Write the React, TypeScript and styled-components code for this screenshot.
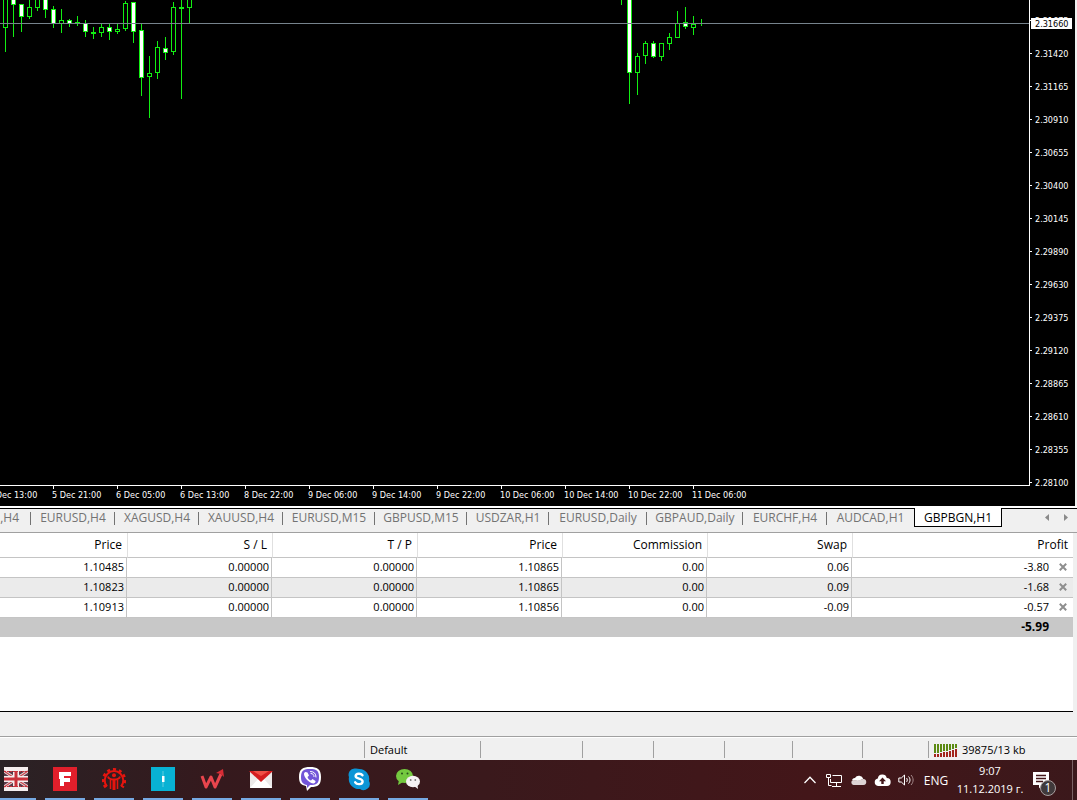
import React from 'react';
import styled, { createGlobalStyle } from 'styled-components';

const GlobalStyle = createGlobalStyle`
  * { box-sizing: border-box; }
  body { margin: 0; background: #f0f0f0; }
  button { font: inherit; color: inherit; border: 0; padding: 0; margin: 0; background: none; }
  ul, ol { list-style: none; margin: 0; padding: 0; }
`;

const Page = styled.div`
  display: flex;
  flex-direction: column;
  height: 100vh;
  overflow: hidden;
  background: #f0f0f0;
  color: #000;
  font-family: 'Open Sans', 'Noto Sans', sans-serif;
  font-size: 12px;
`;

/* ---------- Chart ---------- */

const Chart = styled.section`
  flex: 1 1 0;
  min-height: 0;
  display: grid;
  grid-template-columns: 1fr 45px;
  margin-right: 2px;
  background: #000;
  color: #fff;
  font-family: 'DejaVu Sans Condensed', 'Open Sans', sans-serif;
  font-size: 9px;
  overflow: hidden;
`;

const ChartMain = styled.div`
  display: flex;
  flex-direction: column;
  min-width: 0;
  min-height: 0;
`;

const Plot = styled.div`
  flex: 1;
  min-height: 0;
  overflow: hidden;
  border-right: 1px solid #fff;
  border-bottom: 1px solid #fff;
`;

const PlotSvg = styled.svg`
  display: block;
  width: 100%;
  height: 100%;
`;

const TimeAxis = styled.ol`
  display: flex;
  height: 20px;
  margin-left: -12px;
  overflow: hidden;
`;

const TimeLabel = styled.li`
  flex: 0 0 64px;
  line-height: 12px;
  white-space: nowrap;
  &::before {
    content: '';
    display: block;
    width: 1px;
    height: 3px;
    margin-left: 1px;
    background: #fff;
  }
`;

const PriceScale = styled.div`
  position: relative;
  min-height: 0;
`;

const PriceList = styled.ol`
  padding-top: 4px;
`;

const PriceLabel = styled.li`
  display: flex;
  align-items: center;
  gap: 3px;
  height: 33px;
  &::before {
    content: '';
    width: 2px;
    height: 1px;
    background: #fff;
  }
`;

const CurrentPrice = styled.output`
  position: absolute;
  top: 18px;
  left: 1px;
  width: 41px;
  padding: 1px 0 0 4px;
  line-height: 10px;
  background: #fff;
  color: #000;
`;

/* ---------- Chart tabs ---------- */

const TabBar = styled.nav`
  display: flex;
  flex: 0 0 25px;
  margin-top: 2px;
  border-top: 1px solid #000;
  border-bottom: 1px solid #a0a0a0;
  color: #737373;
  box-shadow: 0 -2px 0 #fff;
`;

const Tab = styled.button<{ $width: number; $divider: boolean; $cut: boolean }>`
  flex: 0 0 ${p => p.$width}px;
  height: 18px;
  display: flex;
  align-items: center;
  justify-content: ${p => (p.$cut ? 'flex-end' : 'center')};
  padding: 0 ${p => (p.$cut ? '12px' : '0')} 2px 0;
  white-space: nowrap;
  position: relative;
  &::after {
    content: '';
    display: ${p => (p.$divider ? 'block' : 'none')};
    position: absolute;
    right: 0;
    top: 3px;
    width: 1px;
    height: 13px;
    background: #737373;
  }
`;

const ActiveTab = styled.button`
  flex: 0 0 88px;
  height: 19px;
  margin-top: -1px;
  border: 1px solid #000;
  border-top: 0;
  background: #fff;
  color: #000;
`;

const TabScroll = styled.div`
  display: flex;
  gap: 8px;
  height: 17px;
  margin-left: auto;
  margin-right: 6px;
`;

const ScrollButton = styled.button`
  width: 11px;
  display: grid;
  place-items: center;
`;

/* ---------- Orders ---------- */

const Orders = styled.section`
  flex: 0 0 179px;
  margin-right: 4px;
  background: #fff;
  border-bottom: 1px solid #000;
`;

const OrdersTable = styled.table`
  width: 100%;
  table-layout: fixed;
  border-collapse: separate;
  border-spacing: 0;
  line-height: 16px;
`;

const HeadCell = styled.th<{ $width?: number }>`
  width: ${p => (p.$width ? `${p.$width}px` : 'auto')};
  height: 25px;
  padding: 0 5px;
  text-align: right;
  font-weight: 400;
  border-left: 1px solid #e0e0e0;
  border-bottom: 1px solid #c4c4c4;
  &:first-child { border-left: 0; }
`;

const OrderRow = styled.tr<{ $shaded?: boolean }>`
  background: ${p => (p.$shaded ? '#ebebeb' : '#fff')};
  font-size: 11px;
`;

const Cell = styled.td`
  height: 20px;
  padding: 0 2px 2px;
  text-align: right;
  border-right: 1px solid #c4c4c4;
  border-bottom: 1px solid #c4c4c4;
`;

const ProfitCell = styled.td`
  height: 20px;
  padding: 0 6px 2px 0;
  border-bottom: 1px solid #c4c4c4;
`;

const ProfitLine = styled.div`
  display: flex;
  align-items: center;
  justify-content: flex-end;
  gap: 9px;
`;

const CloseButton = styled.button`
  display: grid;
  place-items: center;
  width: 9px;
  height: 16px;
`;

const TotalRow = styled.tr`
  background: #c8c8c8;
  font-weight: 700;
`;

const TotalCell = styled.td`
  height: 19px;
  padding: 0 24px 2px 0;
  text-align: right;
`;

/* ---------- Status bar ---------- */

const StatusBar = styled.footer`
  flex: 0 0 24px;
  display: flex;
  margin-top: 24px;
  padding: 4px 0 2px;
  border-top: 1px solid #a0a0a0;
  box-shadow: inset 0 1px 0 #fff;
  font-size: 11px;
`;

const StatusCell = styled.div<{ $width?: number }>`
  flex: ${p => (p.$width ? `0 0 ${p.$width}px` : '1 1 0')};
  display: flex;
  align-items: center;
  gap: 4px;
  padding-left: 5px;
  line-height: 16px;
  border-left: 1px solid #a0a0a0;
  white-space: nowrap;
  &:first-child { border-left: 0; }
`;

/* ---------- Taskbar ---------- */

const Taskbar = styled.footer`
  flex: 0 0 40px;
  display: flex;
  justify-content: space-between;
  overflow: hidden;
  background: linear-gradient(90deg, #2a2225 0, #35191d 20%, #3a191c 45%, #431619 75%, #3b181b 100%);
  color: #fff;
`;

const Apps = styled.div`
  display: flex;
  gap: 9px;
  margin-left: -4px;
`;

const AppButton = styled.button`
  width: 40px;
  height: 40px;
  display: grid;
  place-items: center;
  border-bottom: 2px solid #76a9e2;
`;

const Tray = styled.div`
  display: flex;
  align-items: center;
  gap: 6px;
`;

const TrayButton = styled.button`
  display: grid;
  place-items: center;
  width: 18px;
  height: 40px;
`;

const Language = styled.button`
  width: 28px;
  margin-left: 1px;
`;

const Clock = styled.time`
  width: 68px;
  text-align: center;
  font-size: 11px;
  line-height: 18px;
  white-space: nowrap;
`;

const NotifyButton = styled.button`
  display: flex;
  align-items: flex-start;
  width: 42px;
  height: 40px;
  padding: 9px 0 0 3px;
`;

const ShowDesktop = styled.button`
  width: 5px;
  height: 40px;
  margin-left: -6px;
  border-left: 1px solid #7b6265;
`;

/* ---------- Data ---------- */

// x centre, high, low, body top, body bottom, filled
type Candle = [number, number, number, number, number, boolean];

const candles: Candle[] = [
  [5, -5, 51, -5, 27, false],
  [13, -5, 36, -5, 4, true],
  [21, 4, 31, 4, 16, true],
  [29, 0, 18, 7, 16, false],
  [37, -5, 10, -5, 7, false],
  [45, -5, 17, -5, 9, true],
  [53, 6, 27, 9, 23, true],
  [61, 9, 32, 20, 23, false],
  [69, 19, 26, 20, 23, true],
  [77, 16, 25, 22, 23, true],
  [85, 20, 36, 23, 31, true],
  [93, 27, 38, 32, 33, true],
  [101, 24, 36, 27, 32, false],
  [109, 24, 39, 27, 31, true],
  [117, 23, 33, 29, 31, false],
  [125, 1, 30, 3, 28, false],
  [133, 2, 42, 2, 31, true],
  [141, 24, 95, 30, 77, true],
  [149, 56, 117, 73, 76, false],
  [157, 41, 78, 47, 72, false],
  [165, 37, 59, 48, 52, true],
  [173, 2, 54, 7, 51, false],
  [181, 0, 98, 7, 8, true],
  [189, -5, 23, -5, 7, false],
  [621, -5, 4, -5, -2, false],
  [629, -5, 103, -5, 72, true],
  [637, 53, 94, 56, 72, false],
  [645, 41, 63, 43, 55, false],
  [653, 41, 57, 43, 56, true],
  [661, 43, 60, 43, 56, false],
  [669, 33, 49, 37, 43, false],
  [677, 11, 37, 23, 37, false],
  [685, 7, 28, 22, 26, true],
  [693, 16, 34, 24, 27, false],
  [701, 19, 25, 23, 23, true],
];

const times = [
  '5 Dec 13:00', '5 Dec 21:00', '6 Dec 05:00', '6 Dec 13:00', '8 Dec 22:00', '9 Dec 06:00',
  '9 Dec 14:00', '9 Dec 22:00', '10 Dec 06:00', '10 Dec 14:00', '10 Dec 22:00', '11 Dec 06:00',
];

const prices = [
  '2.31675', '2.31420', '2.31165', '2.30910', '2.30655', '2.30400', '2.30145', '2.29890',
  '2.29630', '2.29375', '2.29120', '2.28865', '2.28610', '2.28355', '2.28100',
];

const tabs: [string, number][] = [
  [',H4', 31], ['EURUSD,H4', 84], ['XAGUSD,H4', 84], ['XAUUSD,H4', 84], ['EURUSD,M15', 92],
  ['GBPUSD,M15', 92], ['USDZAR,H1', 82], ['EURUSD,Daily', 98], ['GBPAUD,Daily', 96],
  ['EURCHF,H4', 84], ['AUDCAD,H1', 87],
];

const columns: [string, number?][] = [
  ['Price', 127], ['S / L', 145], ['T / P', 145], ['Price', 145], ['Commission', 145], ['Swap', 145], ['Profit'],
];

const orders = [
  { cells: ['1.10485', '0.00000', '0.00000', '1.10865', '0.00', '0.06'], profit: '-3.80' },
  { cells: ['1.10823', '0.00000', '0.00000', '1.10865', '0.00', '0.09'], profit: '-1.68' },
  { cells: ['1.10913', '0.00000', '0.00000', '1.10856', '0.00', '-0.09'], profit: '-0.57' },
];

/* ---------- Drawings ---------- */

const LIME = '#12ee12';

const CandleMark = ({ c: [x, high, low, top, bottom, filled] }: { c: Candle }) => (
  <g>
    <rect x={x} y={high} width={1} height={low - high + 1} fill={LIME} />
    <rect x={x - 2} y={top} width={5} height={bottom - top + 1} fill={LIME} />
    {bottom - top > 1 && (
      <rect x={x - 1} y={top + 1} width={3} height={bottom - top - 1} fill={filled ? '#fff' : '#000'} />
    )}
  </g>
);

const FlagIcon = () => (
  <svg width="24" height="24" viewBox="0 0 24 24">
    <path fill="#f4eeee" d="M0 0h24v24H0z" />
    <path fill="#5b3a48" d="M0 4h24v16H0z" />
    <path stroke="#efdfe0" strokeWidth="3" d="M0 4l24 16M24 4L0 20" />
    <path stroke="#c6454d" strokeWidth="1.200" d="M0 4l24 16M24 4L0 20" />
    <path fill="#f4eeee" d="M9 4h6v16H9zM0 9h24v6H0z" />
    <path fill="#c9303a" d="M10.500 4h3v16h-3zM0 10.500h24v3H0z" />
    <path stroke="#c9303a" d="M0 4.500h24M0 19.500h24" strokeDasharray="2 1" />
  </svg>
);

const FIcon = () => (
  <svg width="24" height="24" viewBox="0 0 24 24">
    <path fill="#e11f2b" d="M0 0h24v24H0z" />
    <path fill="#fff" d="M6 5h12v4h-7v2h6v4h-6v4H7v-7H6z" />
  </svg>
);

const GearIcon = () => (
  <svg width="24" height="24" viewBox="0 0 24 24" fill="none" stroke="#e5150f">
    <path strokeWidth="2" d="M5 19.500A9.300 9.300 0 1 1 19 19.500" />
    <path strokeWidth="2.500" strokeDasharray="3 3" d="M3.700 20.500A11 11 0 1 1 20.300 20.500" />
    <circle cx="12" cy="8.300" r="2" fill="#e5150f" stroke="none" />
    <path strokeWidth="1.800" d="M6 9.500c.5 2.500 3 3 6 3s5.500-.5 6-3" />
    <path strokeWidth="3" d="M12 12.500V23" />
    <path strokeWidth="1.500" d="M8.500 13v9M15.500 13v9" />
  </svg>
);

const InfoIcon = () => (
  <svg width="24" height="24" viewBox="0 0 24 24">
    <path fill="#08b2d4" d="M0 0h24v24H0z" />
    <path stroke="#61cde0" d="M12 4v16" />
    <path fill="#fff" d="M11 9h2.500v6H11z" />
  </svg>
);

const WIcon = () => (
  <svg width="26" height="24" viewBox="0 0 26 24" fill="none">
    <path stroke="#e8454d" strokeWidth="3" strokeLinejoin="round" d="M3 9l4 11 5-10 4 10 6-13" />
    <path fill="#d92c35" d="M17 6l7-4 1 8-3-3z" />
  </svg>
);

const MailIcon = () => (
  <svg width="24" height="20" viewBox="0 0 24 20">
    <path fill="#eceaea" d="M1 3h22v16H1z" />
    <path fill="#fff" d="M1 19l8-9h6l8 9z" />
    <path fill="#d41c1f" d="M0 2h24L12 13z" />
    <path fill="#f04e45" d="M4 2h16l-8 5z" />
  </svg>
);

const ViberIcon = () => (
  <svg width="24" height="26" viewBox="0 0 24 26">
    <path fill="#fff" d="M12 1c7 0 11 2 11 10s-3 10-10 10l-4 4-1-5C3 19 1 17 1 11 1 3 5 1 12 1z" />
    <path fill="#7255d8" d="M12 3c6 0 9 1.500 9 8s-2.500 8-9 8l-3 3v-3c-4-.7-6-2.500-6-8 0-6.500 3-8 9-8z" />
    <path fill="#fff" d="M7.500 6l2 .5 1.500 3-1.500 1.500c.5 1.800 1.700 3 3.500 3.500l1.500-1.500 3 2c.3 1.500-1 2.500-2.200 2.500C10 16.500 6 11 6 8c0-1 .7-2 1.500-2z" />
    <path fill="none" stroke="#fff" strokeLinecap="round" d="M12.500 5.500c3.500 0 5.500 2 5.500 5.500M13 7.500c2 .1 3 1.200 3 3" />
  </svg>
);

const SkypeIcon = () => (
  <svg width="24" height="24" viewBox="0 0 24 24">
    <path fill="#0b95d6" d="M7.500 1.500A10 10 0 0 1 12.500 2a10 10 0 0 1 9.500 12A6.200 6.200 0 0 1 13 22 10 10 0 0 1 2 10 6.200 6.200 0 0 1 7.500 1.500z" />
    <path fill="none" stroke="#fff" strokeWidth="2.400" strokeLinecap="round" d="M15.500 8.300C14 6.200 9 6.200 8.600 9c0 3.200 7 2 7 5.500 0 3.300-5.800 3.500-7.400.8" />
  </svg>
);

const WeChatIcon = () => (
  <svg width="26" height="22" viewBox="0 0 26 22">
    <ellipse cx="9.500" cy="8" rx="8.500" ry="7" fill="#74c93f" />
    <path fill="#74c93f" d="M4 12l-1 5 5-3z" />
    <circle cx="7" cy="5.500" r="1" fill="#29501b" />
    <circle cx="12.500" cy="5.500" r="1" fill="#29501b" />
    <ellipse cx="18" cy="13.500" rx="7" ry="5.800" fill="#f5f2f4" />
    <path fill="#f5f2f4" d="M19 18l4 3-.5-4z" />
    <circle cx="15.700" cy="12" r=".9" fill="#777" />
    <circle cx="20.300" cy="12" r=".9" fill="#777" />
  </svg>
);

const apps: [string, () => React.JSX.Element][] = [
  ['English', FlagIcon], ['F', FIcon], ['Gear', GearIcon], ['Info', InfoIcon], ['W', WIcon],
  ['Mail', MailIcon], ['Viber', ViberIcon], ['Skype', SkypeIcon], ['WeChat', WeChatIcon],
];

const TrafficIcon = () => (
  <svg width="24" height="14" viewBox="0 0 24 14" shapeRendering="crispEdges">
    {[10, 10, 9, 8, 8, 7, 6, 5].map((h, i) => (
      <g key={i}>
        <path fill="#5c8a12" d={`M${i * 3} 1h2v${h - 1}h-2z`} />
        <path fill="#a3261d" d={`M${i * 3} ${h + 1}h2V14h-2z`} />
      </g>
    ))}
  </svg>
);

const ChevronIcon = () => (
  <svg width="12" height="8" viewBox="0 0 12 8" fill="none" stroke="#fff" strokeWidth="1.300">
    <path d="M.5 7L6 1.300 11.500 7" />
  </svg>
);

const NetworkIcon = () => (
  <svg width="17" height="15" viewBox="0 0 17 15" fill="none" stroke="#fff">
    <path d="M6.500 2.500h9v7h-11V6M.5 1.500h4v3h-4zM2.500 4.500v8h3M10.500 9.500v4M6 13.500h9" />
  </svg>
);

const CloudIcon = () => (
  <svg width="17" height="12" viewBox="0 0 17 12">
    <path fill="#fff" d="M2 6a3 3 0 0 1 3-2 4.500 4.500 0 0 1 8.300 1L8 7z" />
    <path fill="#ddd3d4" d="M3 6l5 .5 5-1.500a3 3 0 0 1 .5 6h-10A2.600 2.600 0 0 1 3 6z" />
  </svg>
);

const UploadIcon = () => (
  <svg width="17" height="12" viewBox="0 0 17 12">
    <path fill="#fff" d="M3.800 4.500A4.600 4.600 0 0 1 12.800 4 4 4 0 0 1 12.500 12H4a3.800 3.800 0 0 1-.2-7.500z" />
    <path fill="#43171a" d="M8.500 3.500L5 7.200h2.300V10h2.400V7.200H12z" />
  </svg>
);

const VolumeIcon = () => (
  <svg width="17" height="14" viewBox="0 0 17 14" fill="none" stroke="#fff">
    <path d="M.8 5v4h2.500l3.200 3V2L3.300 5zM8.500 5c1 1 1 3 0 4M10.500 3.500c2 2 2 5 0 7" />
    <path stroke="#a58b8d" d="M13 2c2.800 3 2.800 7 0 10" />
  </svg>
);

const NotifyIcon = () => (
  <svg width="26" height="28" viewBox="0 0 26 28">
    <path fill="#fff" d="M0 3h16v13H9l-3 3.500V16H0z" />
    <path stroke="#43171a" strokeWidth="1.300" d="M3 6.500h10M3 9.500h10M3 12.500h7" />
    <circle cx="15" cy="19" r="7.500" fill="#40393b" stroke="#a89e9f" />
    <text x="15" y="23" textAnchor="middle" fontSize="12" fill="#fff">1</text>
  </svg>
);

export default function App() {
  return (
    <>
      <GlobalStyle />
      <Page>
        <Chart aria-label="GBPBGN,H1">
          <ChartMain>
            <Plot>
              <PlotSvg shapeRendering="crispEdges">
                {candles.map(c => <CandleMark key={c[0]} c={c} />)}
                <rect x="0" y="23" width="100%" height="1" fill="#76838c" />
              </PlotSvg>
            </Plot>
            <TimeAxis>
              {times.map(t => <TimeLabel key={t}>{t}</TimeLabel>)}
            </TimeAxis>
          </ChartMain>
          <PriceScale>
            <PriceList>
              {prices.map(p => <PriceLabel key={p}>{p}</PriceLabel>)}
            </PriceList>
            <CurrentPrice>2.31660</CurrentPrice>
          </PriceScale>
        </Chart>

        <TabBar>
          {tabs.map(([name, width], i) => (
            <Tab key={name} $width={width} $divider={i < tabs.length - 1} $cut={i === 0}>{name}</Tab>
          ))}
          <ActiveTab>GBPBGN,H1</ActiveTab>
          <TabScroll>
            <ScrollButton aria-label="Previous tabs">
              <svg width="4" height="7"><path fill="#8a8a8a" d="M4 0v7L0 3.500z" /></svg>
            </ScrollButton>
            <ScrollButton aria-label="Next tabs">
              <svg width="4" height="7"><path fill="#8a8a8a" d="M0 0v7l4-3.500z" /></svg>
            </ScrollButton>
          </TabScroll>
        </TabBar>

        <Orders>
          <OrdersTable>
            <thead>
              <tr>
                {columns.map(([name, width], i) => <HeadCell key={i} $width={width}>{name}</HeadCell>)}
              </tr>
            </thead>
            <tbody>
              {orders.map((o, i) => (
                <OrderRow key={o.profit} $shaded={i % 2 === 1}>
                  {o.cells.map((v, j) => <Cell key={j}>{v}</Cell>)}
                  <ProfitCell>
                    <ProfitLine>
                      {o.profit}
                      <CloseButton aria-label="Close order">
                        <svg width="8" height="8" viewBox="0 0 8 8">
                          <path stroke="#8e8e8e" strokeWidth="2" d="M.8 .8l6.400 6.400M7.200 .8L.8 7.200" />
                        </svg>
                      </CloseButton>
                    </ProfitLine>
                  </ProfitCell>
                </OrderRow>
              ))}
              <TotalRow>
                <TotalCell colSpan={7}>-5.99</TotalCell>
              </TotalRow>
            </tbody>
          </OrdersTable>
        </Orders>

        <StatusBar>
          <StatusCell />
          <StatusCell $width={116}>Default</StatusCell>
          <StatusCell $width={102} />
          <StatusCell $width={71} />
          <StatusCell $width={71} />
          <StatusCell $width={68} />
          <StatusCell $width={70} />
          <StatusCell $width={66} />
          <StatusCell $width={149}><TrafficIcon />39875/13 kb</StatusCell>
        </StatusBar>

        <Taskbar>
          <Apps>
            {apps.map(([name, Icon]) => (
              <AppButton key={name} aria-label={name}><Icon /></AppButton>
            ))}
          </Apps>
          <Tray>
            <TrayButton aria-label="Show hidden icons"><ChevronIcon /></TrayButton>
            <TrayButton aria-label="Network"><NetworkIcon /></TrayButton>
            <TrayButton aria-label="Cloud storage"><CloudIcon /></TrayButton>
            <TrayButton aria-label="Upload"><UploadIcon /></TrayButton>
            <TrayButton aria-label="Volume"><VolumeIcon /></TrayButton>
            <Language>ENG</Language>
            <Clock>9:07<br />11.12.2019 г.</Clock>
            <NotifyButton aria-label="Notifications"><NotifyIcon /></NotifyButton>
            <ShowDesktop aria-label="Show desktop" />
          </Tray>
        </Taskbar>
      </Page>
    </>
  );
}
